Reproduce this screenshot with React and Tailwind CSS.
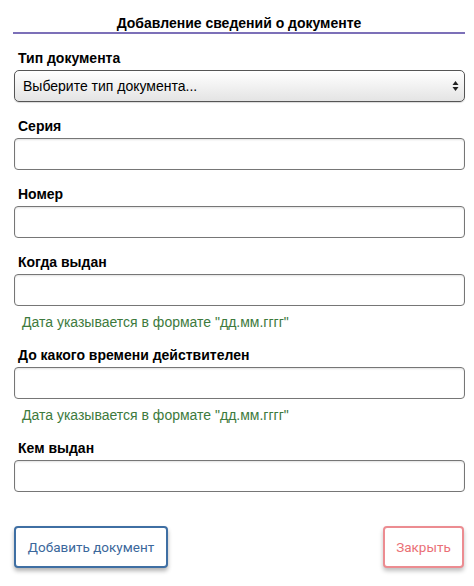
import { useState } from "react";

const FIELDS = [
  { key: "series", label: "Серия" },
  { key: "number", label: "Номер" },
  { key: "issued", label: "Когда выдан", hint: true },
  { key: "valid", label: "До какого времени действителен", hint: true },
  { key: "issuer", label: "Кем выдан" },
];

const HINT = "Дата указывается в формате \"дд.мм.гггг\"";

function Label({ children }) {
  return <div className="mb-1 pl-1 text-[14px] font-bold leading-4 text-black">{children}</div>;
}

function Field({ label, hint, value, onChange }) {
  return (
    <div className={hint ? "mb-[17px]" : "mb-4"}>
      <Label>{label}</Label>
      <input
        value={value}
        onChange={(e) => onChange(e.target.value)}
        className="block h-8 w-full rounded-[4px] border border-[#767676] bg-white px-2 text-[14px] shadow-[inset_0_1px_2px_rgba(0,0,0,0.12)] outline-none"
      />
      {hint && <div className="mt-2 pl-2 text-[14px] leading-4 text-[#3d7a3d]">{HINT}</div>}
    </div>
  );
}

export default function App() {
  const [vals, setVals] = useState({});
  const set = (k) => (v) => setVals((s) => ({ ...s, [k]: v }));

  return (
    <div className="min-h-screen bg-white pl-[14px] pr-[9px] pt-[14px] font-['Liberation_Sans',Arial,sans-serif]">
      <h2 className="-ml-px border-b-2 border-[#7c70b8] text-center text-[14px] font-bold leading-[18px] text-black">
        Добавление сведений о документе
      </h2>

      <div className="mt-4 mb-4">
        <Label>Тип документа</Label>
        <div className="relative">
          <select className="block h-8 w-full appearance-none rounded-[5px] border border-[#555] bg-gradient-to-b from-white to-[#e4e4e4] pl-2 text-[14px] text-black shadow-[0_1px_1px_rgba(0,0,0,0.15)] outline-none">
            <option>Выберите тип документа...</option>
          </select>
          <svg className="pointer-events-none absolute right-[6px] top-1/2 -translate-y-1/2" width="7" height="11" viewBox="0 0 7 11">
            <path d="M3.5 0.5 L6.5 4.5 H0.5 Z" fill="#222" />
            <path d="M3.5 10.5 L6.5 6.5 H0.5 Z" fill="#222" />
          </svg>
        </div>
      </div>

      {FIELDS.map((f) => (
        <Field key={f.key} label={f.label} hint={f.hint} value={vals[f.key] || ""} onChange={set(f.key)} />
      ))}

      <div className="mt-[34px] flex items-center justify-between pr-px">
        <button type="button" className="h-[42px] w-[154px] rounded-[4px] border-2 border-[#3f6fa3] bg-white font-['Roboto',sans-serif] text-[13.5px] text-[#3b679b] shadow-[0_3px_4px_rgba(0,0,0,0.3)]">
          Добавить документ
        </button>
        <button type="button" className="h-[42px] w-[81px] rounded-[4px] border-2 border-[#ec8c91] bg-white font-['Roboto',sans-serif] text-[13.5px] text-[#ea7076] shadow-[0_3px_4px_rgba(0,0,0,0.25)]">
          Закрыть
        </button>
      </div>
    </div>
  );
}
